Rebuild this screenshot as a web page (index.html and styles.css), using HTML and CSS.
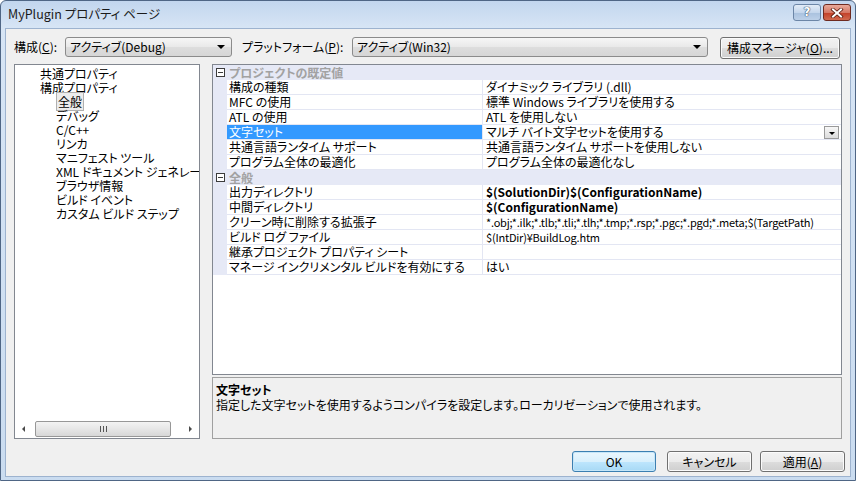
FILE: index.html
```html
<!DOCTYPE html>
<html lang="ja">
<head>
  <meta charset="UTF-8" />
  <title>MyPlugin プロパティ ページ</title>
  <link rel="stylesheet" href="styles.css">
</head>
<body>

  <div class="window">
    <!-- title bar -->
    <div class="titlebar">
      <span class="title">MyPlugin プロパティ ページ</span>
      <div class="caption-buttons">
        <div class="cap cap-help">?</div>
        <div class="cap cap-close">
          <svg width="14" height="10" viewBox="0 0 14 10">
            <path d="M3 1.5 L11 8.5 M11 1.5 L3 8.5" stroke="#5a1c10" stroke-width="3.6" stroke-linecap="square" />
            <path d="M3 1.5 L11 8.5 M11 1.5 L3 8.5" stroke="#fff" stroke-width="2" stroke-linecap="square" />
          </svg>
        </div>
      </div>
    </div>

    <div class="client">
      <!-- configuration / platform row -->
      <div class="toolbar">
        <span class="label label-config">構成(<u>C</u>):</span>
        <div class="combo combo-config">
          <span>アクティブ(Debug)</span>
          <span class="combo-arrow"></span>
        </div>
        <span class="label label-platform">プラットフォーム(<u>P</u>):</span>
        <div class="combo combo-platform">
          <span>アクティブ(Win32)</span>
          <span class="combo-arrow"></span>
        </div>
        <div class="btn btn-manager">構成マネージャ(<u>O</u>)...</div>
      </div>

      <div class="main">
        <!-- tree -->
        <div class="tree">
          <ul class="tree-items">
            <li class="l1">共通プロパティ</li>
            <li class="l1">構成プロパティ</li>
            <li class="l2"><span class="selected">全般</span></li>
            <li class="l2">デバッグ</li>
            <li class="l2">C/C++</li>
            <li class="l2">リンカ</li>
            <li class="l2">マニフェスト ツール</li>
            <li class="l2">XML ドキュメント ジェネレーター</li>
            <li class="l2">ブラウザ情報</li>
            <li class="l2">ビルド イベント</li>
            <li class="l2">カスタム ビルド ステップ</li>
          </ul>
          <div class="hscroll">
            <div class="sb-arrow"><span class="tri-left"></span></div>
            <div class="sb-track">
              <div class="sb-thumb"><span class="grip"></span></div>
            </div>
            <div class="sb-arrow"><span class="tri-right"></span></div>
          </div>
        </div>

        <div class="right">
          <!-- property grid -->
          <div class="grid">
            <div class="row category">
              <div class="gutter"><span class="collapse"></span></div>
              <div class="cat-name">プロジェクトの既定値</div>
            </div>
            <div class="row">
              <div class="gutter"></div>
              <div class="name">構成の種類</div>
              <div class="value">ダイナミック ライブラリ (.dll)</div>
            </div>
            <div class="row">
              <div class="gutter"></div>
              <div class="name">MFC の使用</div>
              <div class="value">標準 Windows ライブラリを使用する</div>
            </div>
            <div class="row">
              <div class="gutter"></div>
              <div class="name">ATL の使用</div>
              <div class="value">ATL を使用しない</div>
            </div>
            <div class="row active">
              <div class="gutter"></div>
              <div class="name">文字セット</div>
              <div class="value">マルチ バイト文字セットを使用する<span class="dd"><span class="dd-tri"></span></span></div>
            </div>
            <div class="row">
              <div class="gutter"></div>
              <div class="name">共通言語ランタイム サポート</div>
              <div class="value">共通言語ランタイム サポートを使用しない</div>
            </div>
            <div class="row">
              <div class="gutter"></div>
              <div class="name">プログラム全体の最適化</div>
              <div class="value">プログラム全体の最適化なし</div>
            </div>
            <div class="row category">
              <div class="gutter"><span class="collapse"></span></div>
              <div class="cat-name">全般</div>
            </div>
            <div class="row">
              <div class="gutter"></div>
              <div class="name">出力ディレクトリ</div>
              <div class="value bold">$(SolutionDir)$(ConfigurationName)</div>
            </div>
            <div class="row">
              <div class="gutter"></div>
              <div class="name">中間ディレクトリ</div>
              <div class="value bold">$(ConfigurationName)</div>
            </div>
            <div class="row">
              <div class="gutter"></div>
              <div class="name">クリーン時に削除する拡張子</div>
              <div class="value small">*.obj;*.ilk;*.tlb;*.tli;*.tlh;*.tmp;*.rsp;*.pgc;*.pgd;*.meta;$(TargetPath)</div>
            </div>
            <div class="row">
              <div class="gutter"></div>
              <div class="name">ビルド ログ ファイル</div>
              <div class="value small">$(IntDir)¥BuildLog.htm</div>
            </div>
            <div class="row">
              <div class="gutter"></div>
              <div class="name">継承プロジェクト プロパティ シート</div>
              <div class="value"></div>
            </div>
            <div class="row">
              <div class="gutter"></div>
              <div class="name">マネージ インクリメンタル ビルドを有効にする</div>
              <div class="value">はい</div>
            </div>
          </div>

          <!-- description -->
          <div class="desc">
            <div class="desc-title">文字セット</div>
            <div class="desc-text">指定した文字セットを使用するようコンパイラを設定します。ローカリゼーションで使用されます。</div>
          </div>
        </div>
      </div>

      <div class="footer">
        <div class="btn btn-default btn-ok">OK</div>
        <div class="btn btn-cancel">キャンセル</div>
        <div class="btn btn-apply">適用(<u>A</u>)</div>
      </div>
    </div>
  </div>

</body>
</html>
```
FILE: styles.css
```css
body {
  margin: 0;
  font-family: "Noto Sans CJK JP", sans-serif;
  font-size: 12px;
  color: #000;
  font-feature-settings: "palt";
}

.window {
  width: 856px;
  height: 481px;
  box-sizing: border-box;
  border: 1px solid #4f6685;
  border-radius: 6px 6px 0 0;
  background: linear-gradient(to bottom, #c2d6ee 0, #d7e5f5 27px, #cadcf0 100%);
  display: flex;
  flex-direction: column;
  overflow: hidden;
}

/* title bar */
.titlebar {
  height: 27px;
  flex: none;
  display: flex;
  justify-content: space-between;
  align-items: flex-start;
  padding: 0 4px 0 7px;
}

.title {
  line-height: 26px;
  font-size: 12.5px;
  color: #1a1a1a;
}

.caption-buttons {
  display: flex;
  gap: 2px;
  margin-top: 3px;
}

.cap {
  width: 28px;
  height: 17px;
  box-sizing: border-box;
  border-radius: 3px;
  display: flex;
  justify-content: center;
  align-items: center;
}

.cap-help {
  border: 1px solid #6c86a7;
  background: linear-gradient(to bottom, #e3ecf7 0, #c4d6ec 50%, #a9c1de 51%, #bcd0e8 100%);
  color: #fff;
  font-family: "DejaVu Sans", sans-serif;
  font-weight: bold;
  font-size: 12px;
  line-height: 15px;
  text-shadow: 0 0 1px #3a4f6b, 0 0 1px #3a4f6b, 0 0 1px #3a4f6b;
}

.cap-close {
  border: 1px solid #6e2a20;
  background: linear-gradient(to bottom, #e9a99a 0, #d57865 50%, #c23e26 51%, #d16a4f 100%);
}

/* client area */
.client {
  flex: 1;
  margin: 0 4px 3px;
  background: #f0f0f0;
  border: 1px solid #9db3cf;
  display: flex;
  flex-direction: column;
}

.toolbar {
  display: flex;
  align-items: flex-start;
  height: 22px;
  margin: 8px 0 0 8px;
}

.label {
  line-height: 20px;
  white-space: nowrap;
}

.label-config { width: 51px; }
.label-platform { width: 110px; margin-left: 10px; }

.combo {
  height: 20px;
  box-sizing: border-box;
  border: 1px solid #8b8b8b;
  border-radius: 3px;
  background: linear-gradient(to bottom, #f6f6f6 0, #e9e9e9 50%, #dddddd 51%, #d6d6d6 100%);
  display: flex;
  align-items: center;
  padding: 0 0 0 4px;
  line-height: 18px;
}

.combo-config { width: 167px; }
.combo-platform { width: 356px; }

.combo-arrow {
  margin-left: auto;
  margin-right: 6px;
  width: 0;
  height: 0;
  border-left: 4px solid transparent;
  border-right: 4px solid transparent;
  border-top: 4px solid #000;
}

.btn {
  box-sizing: border-box;
  border: 1px solid #707070;
  border-radius: 3px;
  background: linear-gradient(to bottom, #f2f2f2 0, #ebebeb 50%, #dddddd 51%, #cfcfcf 100%);
  box-shadow: inset 0 0 0 1px #fbfbfb;
  text-align: center;
  white-space: nowrap;
}

.btn-manager {
  width: 120px;
  height: 22px;
  margin-left: 12px;
  line-height: 20px;
}

/* tree + grid */
.main {
  display: flex;
  height: 375px;
  margin: 5px 0 0 8px;
}

.tree {
  width: 186px;
  box-sizing: border-box;
  border: 1px solid #828790;
  background: #fff;
  display: flex;
  flex-direction: column;
}

.tree-items {
  list-style: none;
  margin: 0;
  padding: 2px 0 0;
  flex: 1;
  overflow: hidden;
}

.tree-items li {
  line-height: 14px;
  height: 14px;
  white-space: nowrap;
}

.tree-items .l1 { padding-left: 25px; }
.tree-items .l2 { padding-left: 41px; }

.tree-items .selected {
  border: 1px solid #b0b0b0;
  background: #ececec;
  padding: 0 1px;
}

.hscroll {
  height: 16px;
  display: flex;
  align-items: stretch;
  margin-bottom: 1px;
}

.sb-arrow {
  width: 17px;
  display: flex;
  justify-content: center;
  align-items: center;
}

.tri-left {
  border-top: 3px solid transparent;
  border-bottom: 3px solid transparent;
  border-right: 3px solid #4a4a4a;
}

.tri-right {
  border-top: 3px solid transparent;
  border-bottom: 3px solid transparent;
  border-left: 3px solid #4a4a4a;
}

.sb-track {
  flex: 1;
  display: flex;
}

.sb-thumb {
  width: 136px;
  margin-left: 3px;
  box-sizing: border-box;
  border: 1px solid #979797;
  border-radius: 2px;
  background: linear-gradient(to bottom, #f3f3f3 0, #e6e6e6 50%, #d7d7d7 100%);
  display: flex;
  justify-content: center;
  align-items: center;
}

.grip {
  width: 7px;
  height: 6px;
  background: repeating-linear-gradient(to right, #555 0, #555 1px, transparent 1px, transparent 3px);
}

.right {
  width: 630px;
  margin-left: 12px;
  display: flex;
  flex-direction: column;
}

.grid {
  height: 311px;
  box-sizing: border-box;
  border: 1px solid #828790;
  background: #fff;
}

.row {
  display: grid;
  grid-template-columns: 14px 256px 1fr;
  height: 15px;
}

.gutter {
  background: #e6e9f6;
}

.name,
.value {
  height: 14px;
  line-height: 14px;
  border-bottom: 1px solid #e3e6f3;
  white-space: nowrap;
}

.name {
  padding-left: 2px;
  border-right: 1px solid #e3e6f3;
}

.value {
  padding-left: 3px;
  display: flex;
  align-items: center;
}

.value.bold {
  font-weight: bold;
}

.value.small {
  font-size: 11px;
  letter-spacing: -0.2px;
}

.row.category {
  grid-template-columns: 14px 1fr;
  background: #e6e9f6;
}

.collapse {
  display: block;
  width: 9px;
  height: 9px;
  box-sizing: border-box;
  margin: 3px 0 0 3px;
  border: 1px solid #3c3c3c;
  background: linear-gradient(#3c3c3c, #3c3c3c) center / 5px 1px no-repeat #fff;
}

.cat-name {
  padding-left: 2px;
  line-height: 15px;
  font-weight: bold;
  color: #a2a2a2;
}

.row.active .name {
  background: #3399ff;
  color: #fff;
}

.dd {
  margin-left: auto;
  margin-right: 2px;
  width: 15px;
  height: 13px;
  box-sizing: border-box;
  border: 1px solid #9a9a9a;
  background: linear-gradient(to bottom, #f7f7f7, #dcdcdc);
  display: flex;
  justify-content: center;
  align-items: center;
}

.dd-tri {
  border-left: 3px solid transparent;
  border-right: 3px solid transparent;
  border-top: 3px solid #000;
  margin-top: 2px;
}

.desc {
  height: 62px;
  margin-top: 2px;
  box-sizing: border-box;
  border: 1px solid #a0a0a0;
  padding: 4px 3px;
  line-height: 15px;
}

.desc-title {
  font-weight: bold;
}

/* dialog buttons */
.footer {
  display: flex;
  justify-content: flex-end;
  margin-top: 12px;
  padding-right: 5px;
}

.footer .btn {
  height: 21px;
  line-height: 19px;
  width: 85px;
}

.btn-ok { width: 84px !important; }
.btn-cancel { margin-left: 11px; }
.btn-apply { margin-left: 8px; }

.btn-default {
  border-color: #3c7fb1;
  background: linear-gradient(to bottom, #eaf6fd 0, #d9f0fc 50%, #bee6fd 51%, #a7d9f5 100%);
  box-shadow: inset 0 0 0 1px #c6e6f8;
}
```
